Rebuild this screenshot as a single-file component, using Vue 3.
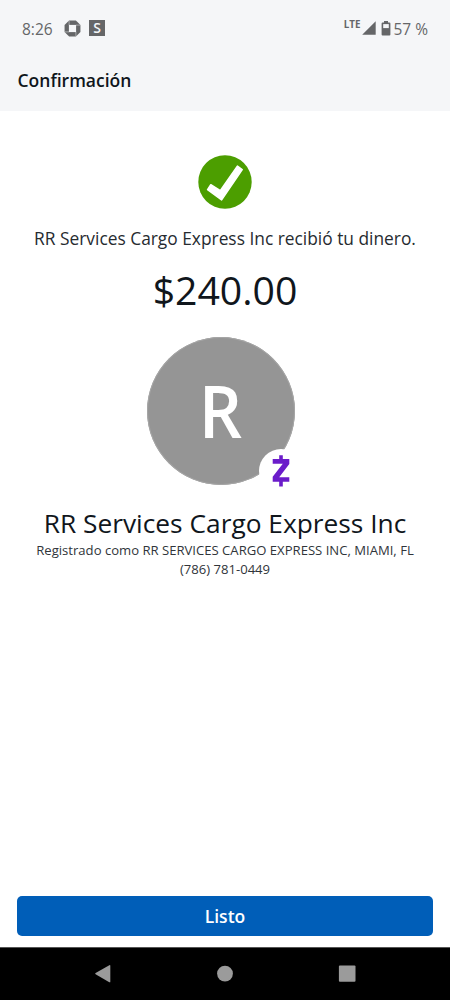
<script setup>
const recipient = 'RR Services Cargo Express Inc'
const amount = '$240.00'
</script>

<template>
  <main class="screen">
    <header class="top">
      <div class="status">
        <span class="clock">8:26</span>
        <svg class="chase" viewBox="0 0 18 18">
          <path fill="#656668" d="M5.4.6h7.2l4.8 4.8v7.2l-4.8 4.8H5.4L.6 12.6V5.4z" />
          <path fill="#f5f6f8" d="M5.2 5.2h7.6v7.6H5.2z" />
          <path stroke="#f5f6f8" stroke-width=".5" fill="none" d="M5.4 5.4V.8M12.6 5.4h4.6M12.6 12.6v4.6M5.4 12.6H.8" />
        </svg>
        <span class="square">S</span>
        <span class="lte">LTE</span>
        <svg class="signal" viewBox="0 0 14 14"><path fill="#656668" d="M13.7.2v13.5H.2z" /></svg>
        <svg class="battery" viewBox="0 0 10 15">
          <path fill="#656668" d="M3 0h4v1.6h1.4q1 0 1 1v11q0 1-1 1H1.6q-1 0-1-1v-11q0-1 1-1H3z" />
          <path fill="#f5f6f8" d="M2.2 3.1h5.6v4H2.2z" />
        </svg>
        <span class="percent">57 %</span>
      </div>
      <h1 class="title">Confirmación</h1>
    </header>

    <section class="body">
      <svg class="check" viewBox="0 0 54 54">
        <circle cx="27" cy="27" r="26.7" fill="#4c9e00" />
        <path
          d="M12.8 29.8 22.3 35.7 39.4 11.2 44.2 14.6 23.6 44.9 9.6 34.6Z"
          fill="#fff" stroke="#fff" stroke-width="1.6" stroke-linejoin="round"
        />
      </svg>
      <p class="message">{{ recipient }} recibió tu dinero.</p>
      <p class="amount">{{ amount }}</p>
      <div class="avatar">
        <span class="initial">R</span>
        <svg class="zelle" viewBox="0 0 44 44">
          <circle cx="22" cy="22" r="22" fill="#fff" />
          <path
            d="M20.2 6.3H23.8V10.1H30.3V15.1L20.2 28.3H30.3V32.8H23.8V37.4H20.2V32.8H13.7V27.7L23.8 14.7H13.7V10.1H20.2Z"
            fill="#6b1cca"
          />
        </svg>
      </div>
      <h2 class="name">{{ recipient }}</h2>
      <p class="detail registered">Registrado como RR SERVICES CARGO EXPRESS INC, MIAMI, FL</p>
      <p class="detail phone">(786) 781-0449</p>
    </section>

    <button class="done">Listo</button>

    <nav class="nav">
      <svg viewBox="0 0 18 20"><path fill="#9b9b9b" d="M15.3 1.2q1-.5 1 .5v16q0 1-1 .5L1.6 10.3q-.9-.6 0-1.2z" /></svg>
      <svg viewBox="0 0 18 20"><circle cx="9" cy="9.6" r="7.9" fill="#9b9b9b" /></svg>
      <svg viewBox="0 0 18 20"><rect x=".9" y="1.4" width="16.6" height="16.4" rx="1" fill="#9b9b9b" /></svg>
    </nav>
  </main>
</template>

<style>
body { margin: 0; background: #fff; }
</style>

<style scoped>
.screen {
  width: 450px;
  height: 1000px;
  display: flex;
  flex-direction: column;
  background: #fff;
  color: #10161c;
  font-family: "Open Sans", "Noto Sans", sans-serif;
  overflow: hidden;
}
h1, h2, p { margin: 0; font-weight: 400; white-space: nowrap; }
.top { height: 111px; background: #f5f6f8; flex: none; }
.status { display: flex; align-items: center; height: 56px; padding: 0 22px; color: #656668; }
.clock { font-size: 15.5px; width: 42px; line-height: 20px; padding-top: 1px; white-space: nowrap; }
.chase { width: 17px; height: 17px; }
.square {
  width: 16px; height: 16px; margin-left: 8px;
  background: #656668; color: #f5f6f8;
  font-size: 14px; font-weight: 600; line-height: 16px; text-align: center;
}
.lte { margin-left: auto; font-size: 9.8px; font-weight: 700; line-height: 10px; margin-bottom: 6px; }
.signal { width: 14px; height: 14px; margin-left: 2px; }
.battery { width: 10px; height: 15px; margin-left: 5px; }
.percent { font-size: 15.5px; margin-left: 2px; line-height: 20px; padding-top: 1px; }
.title { padding-left: 17.5px; font-size: 17.5px; font-weight: 600; line-height: 24px; margin-top: 12px; }
.body { flex: 1; display: flex; flex-direction: column; align-items: center; padding-top: 44px; }
.check { width: 54px; height: 54px; }
.message { font-size: 17.35px; line-height: 24px; margin-top: 17px; color: #262b30; }
.amount { font-size: 39.2px; line-height: 54px; margin-top: 13px; }
.avatar {
  position: relative;
  width: 148px; height: 148px; margin: 20px 8px 0 0;
  border-radius: 50%;
  background: #959595;
  box-shadow: inset 0 0 0 1px #a6a6a6;
  display: flex; align-items: center; justify-content: center;
}
.initial { color: #fff; font-size: 73px; line-height: 100px; font-weight: 600; transform: translate(-1px, -1px) scaleX(.93); }
.zelle { position: absolute; left: 112px; top: 112px; width: 44px; height: 44px; }
.name { font-size: 26.3px; line-height: 34px; margin-top: 21px; }
.detail { font-size: 13.1px; line-height: 18px; color: #30353a; }
.registered { margin-top: 1px; }
.phone { margin-top: 1px; }
.done {
  flex: none; height: 40px; margin: 0 17px 11px;
  border: 0; border-radius: 5px;
  background: #005eb8; color: #fff;
  font: 600 17.5px/40px "Open Sans", "Noto Sans", sans-serif; padding: 0;
}
.nav {
  flex: none; box-sizing: border-box; height: 53px; background: #000; border-top: 1px solid #555;
  display: flex; justify-content: space-between; align-items: center; padding: 0 94px;
}
.nav svg { width: 18px; height: 20px; }
</style>
